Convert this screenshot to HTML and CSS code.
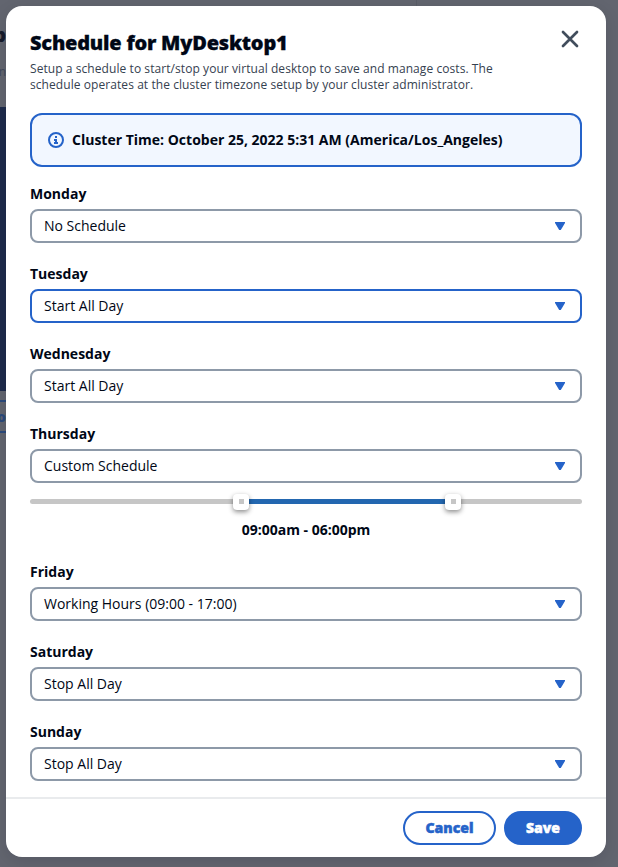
FILE: index.html
```html
<!DOCTYPE html>
<html lang="en">
<head>
<meta charset="utf-8">
<title>Schedule for MyDesktop1</title>
<link rel="stylesheet" href="styles.css">
</head>
<body>
<div class="backdrop" aria-hidden="true">
  <div class="page-title">p</div>
  <div class="page-note">n</div>
  <div class="preview"></div>
  <div class="page-button">o</div>
  <div class="page-edge"></div>
</div>
<main class="modal">
  <header class="head">
    <div>
      <h1>Schedule for MyDesktop1</h1>
      <p>Setup a schedule to start/stop your virtual desktop to save and manage costs. The schedule operates at the cluster timezone setup by your cluster administrator.</p>
    </div>
    <button class="close" aria-label="Close"><svg width="18" height="18" viewBox="0 0 18 18"><path d="M2 2 16 16M16 2 2 16"/></svg></button>
  </header>
  <section class="body">
    <div class="alert">
      <svg width="16" height="16" viewBox="0 0 16 16"><circle cx="8" cy="8" r="7"/><path d="M8 4v2M6 8h2v3M6 11h4"/></svg>
      <span>Cluster Time: October 25, 2022 5:31 AM (America/Los_Angeles)</span>
    </div>
    <div class="field"><label>Monday</label><div class="select"><span>No Schedule</span><i class="caret"></i></div></div>
    <div class="field"><label>Tuesday</label><div class="select focused"><span>Start All Day</span><i class="caret"></i></div></div>
    <div class="field"><label>Wednesday</label><div class="select"><span>Start All Day</span><i class="caret"></i></div></div>
    <div class="field"><label>Thursday</label><div class="select"><span>Custom Schedule</span><i class="caret"></i></div>
      <div class="slider"><i class="rail before"></i><i class="thumb"></i><i class="rail range"></i><i class="thumb"></i><i class="rail after"></i></div>
      <div class="time">09:00am - 06:00pm</div>
    </div>
    <div class="field"><label>Friday</label><div class="select"><span>Working Hours (09:00 - 17:00)</span><i class="caret"></i></div></div>
    <div class="field"><label>Saturday</label><div class="select"><span>Stop All Day</span><i class="caret"></i></div></div>
    <div class="field"><label>Sunday</label><div class="select"><span>Stop All Day</span><i class="caret"></i></div></div>
  </section>
  <footer class="foot"><button class="btn">Cancel</button><button class="btn primary">Save</button></footer>
</main>
</body>
</html>
```
FILE: styles.css
```css
* { box-sizing: border-box; }
body {
  margin: 0;
  height: 867px;
  padding: 6px 12px 10px 6px;
  overflow: hidden;
  background: #62656f;
  color: #000716;
  font: 14px/22px "Open Sans", sans-serif;
}
button { font: inherit; padding: 0; background: none; border: 0; }
.backdrop { position: absolute; inset: 0; overflow: hidden; }
.page-title { height: 56px; padding-top: 24px; width: 6px; font-size: 20px; font-weight: 800; color: #161b2b; direction: rtl; }
.page-note { height: 51px; padding-top: 5px; width: 6px; font-size: 12px; color: #41495a; direction: rtl; }
.preview { width: 20px; height: 284px; background: #1e2b4b; }
.page-button { width: 6px; height: 33px; margin-top: 9px; border: solid #2b4a7c; border-width: 2px 0; line-height: 29px; font-weight: 800; color: #2b4a7c; direction: rtl; }
.page-edge { position: absolute; left: 416px; top: 0; width: 1px; height: 6px; background: #5a5d67; }
.modal {
  position: relative;
  height: 851px;
  display: flex;
  flex-direction: column;
  background: #fff;
  border-radius: 16px;
  box-shadow: 0 4px 16px rgba(0, 7, 22, .12);
}
.head { flex: none; display: flex; justify-content: space-between; height: 107px; padding: 24px 27px 0 24px; }
.head h1 { margin: 1px 0 0; font-size: 20px; line-height: 24px; font-weight: 800; letter-spacing: -.22px; -webkit-text-stroke: .3px; }
.head p { width: 490px; margin: 6px 0 0; color: #354150; font-size: 12px; line-height: 16px; letter-spacing: .07px; }
.close { width: 18px; height: 18px; }
.close svg { display: block; fill: none; stroke: #414d5c; stroke-width: 2.7; stroke-linecap: round; }
.body { flex: 1; padding: 0 24px; }
.alert {
  display: flex;
  align-items: center;
  gap: 8px;
  height: 54px;
  margin-bottom: 16px;
  padding: 0 16px;
  border: 2px solid #2563c9;
  border-radius: 12px;
  background: #f2f7ff;
  font-weight: 700;
}
.alert svg { fill: none; stroke: #2563c9; stroke-width: 2; }
.field { margin-bottom: 20px; }
.field:last-child { margin-bottom: 0; }
.field label { display: block; margin-bottom: 4px; font-weight: 700; }
.select {
  display: flex;
  align-items: center;
  justify-content: space-between;
  height: 34px;
  padding: 0 15px 0 12px;
  border: 2px solid #8d99a8;
  border-radius: 8px;
}
.focused { border-color: #2563c9; }
.caret { width: 10px; height: 8px; background: #2563c9; clip-path: polygon(0 0, 100% 0, 100% 12%, 58% 100%, 42% 100%, 0 12%); }
.slider { display: flex; align-items: center; height: 16px; margin-top: 11px; }
.rail { height: 5px; margin-bottom: 1px; background: #c6c6c6; }
.before { width: 203px; border-radius: 3px 0 0 3px; }
.range { flex: 1; background: #2367b0; }
.after { width: 121px; border-radius: 0 3px 3px 0; }
.thumb { display: flex; justify-content: center; width: 16px; height: 16px; padding-top: 5px; border-radius: 4px; background: #fff; box-shadow: 0 2px 5px rgba(0, 0, 0, .45); z-index: 1; }
.thumb::after { content: ""; width: 5px; height: 5px; background: #c6c6c6; }
.time { margin-top: 9px; text-align: center; font-weight: 700; }
.foot { flex: none; display: flex; justify-content: flex-end; gap: 8px; height: 60px; padding: 12px 24px; border-top: 2px solid #e9ebed; }
.btn { width: 93px; height: 34px; border: 2px solid #2563c9; border-radius: 17px; color: #2563c9; font-weight: 800; -webkit-text-stroke: .5px; }
.primary { width: 78px; background: #2563c9; color: #fff; }
```
